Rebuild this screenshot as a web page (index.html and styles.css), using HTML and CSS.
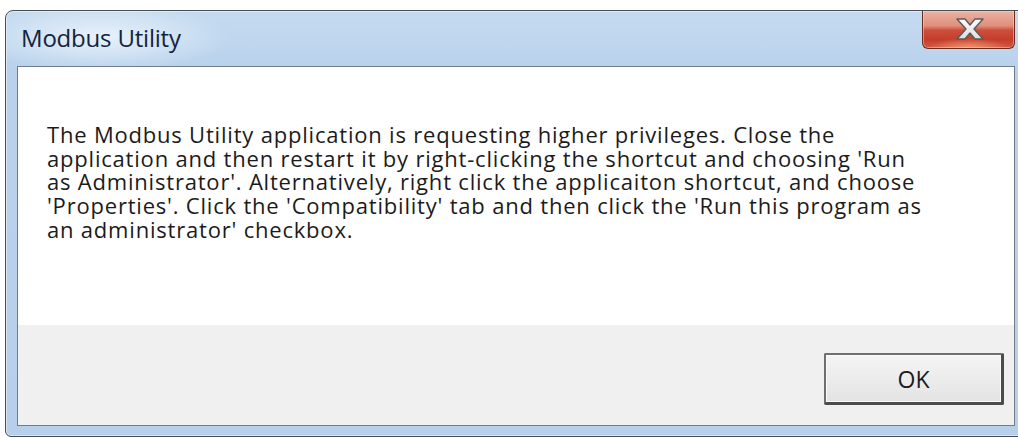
FILE: index.html
```html
<!DOCTYPE html>
<html lang="en">
<head>
<meta charset="utf-8">
<title>Modbus Utility</title>
<link rel="stylesheet" href="styles.css">
</head>
<body>
  <div class="window">
    <div class="titlebar">
      <span class="title">Modbus Utility</span>
      <button class="close" aria-label="Close">
        <svg width="93" height="38" viewBox="0 0 93 38">
          <defs>
            <linearGradient id="xfill" x1="0" y1="0" x2="0" y2="1">
              <stop offset="0" stop-color="#ffffff"/>
              <stop offset="1" stop-color="#dcdcdc"/>
            </linearGradient>
          </defs>
          <!-- the close glyph: an X with flat, horizontal ends -->
          <polygon transform="translate(35 9)"
                   points="0,0 8,0 13,6 18,0 26,0 17,10 26,20 18,20 13,14 8,20 0,20 9,10"
                   fill="url(#xfill)" stroke="#5a5a5a" stroke-width="1.4" stroke-linejoin="round"/>
        </svg>
      </button>
    </div>
    <div class="client">
      <div class="message">
        <p class="line">The Modbus Utility application is requesting higher privileges. Close the</p>
        <p class="line">application and then restart it by right-clicking the shortcut and choosing 'Run</p>
        <p class="line">as Administrator'. Alternatively, right click the applicaiton shortcut, and choose</p>
        <p class="line">'Properties'. Click the 'Compatibility' tab and then click the 'Run this program as</p>
        <p class="line">an administrator' checkbox.</p>
      </div>
      <div class="footer">
        <button class="ok">OK</button>
      </div>
    </div>
  </div>
</body>
</html>
```

FILE: styles.css
```css
html, body {
  margin: 0;
  padding: 0;
  background: #ffffff;
  overflow: hidden;
}

body {
  width: 1018px;
  height: 437px;
}

/* Aero-style dialog frame */
.window {
  box-sizing: border-box;
  margin: 10px 0 0 5px;
  width: 1022px;
  height: 427px;
  border: 1px solid #4a4f57;
  border-radius: 8px 8px 6px 6px;
  background:
    linear-gradient(to bottom, #c4daf0 0, #b9d2ec 60px, #b6cfea 100%);
  box-shadow: inset 0 0 0 1px rgba(255, 255, 255, 0.45);
  display: flex;
  flex-direction: column;
}

.titlebar {
  height: 55px;
  flex: none;
  display: flex;
  justify-content: space-between;
  align-items: flex-start;
  padding-left: 15px;
  background:
    radial-gradient(ellipse 130px 34px at 95px 26px, rgba(235, 243, 251, 0.95), rgba(235, 243, 251, 0) 100%);
  border-radius: 7px 7px 0 0;
}

.title {
  font-family: "Open Sans", "Noto Sans", sans-serif;
  font-size: 24px;
  line-height: 24px;
  margin-top: 15px;
  color: #14233c;
  letter-spacing: -0.2px;
}

.close {
  box-sizing: border-box;
  width: 93px;
  height: 38px;
  margin: 0 11px 0 0;
  padding: 0;
  border: 1px solid #6f2a20;
  border-top: none;
  border-radius: 0 0 6px 6px;
  background:
    radial-gradient(ellipse 40px 10px at 50% 100%, rgba(246, 160, 120, 0.85), rgba(246, 160, 120, 0) 100%),
    linear-gradient(to bottom, #eab3a4 0%, #e08f7b 40%, #cc4f3b 52%, #c53d2b 78%, #d25a42 100%);
  box-shadow: inset 0 0 0 1px rgba(255, 220, 210, 0.45);
  display: block;
}

.close svg {
  display: block;
  margin: -1px 0 0 -1px;
}

/* client area */
.client {
  flex: 1;
  margin: 0 11px 10px 11px;
  border: 1px solid #707c8a;
  display: flex;
  flex-direction: column;
  background: #f0f0f0;
}

.message {
  height: 258px;
  flex: none;
  box-sizing: border-box;
  background: #ffffff;
  padding: 56px 0 0 29px;
  font-family: "Open Sans", "Noto Sans", sans-serif;
  font-size: 22px;
  letter-spacing: 0.8px;
  color: #1b1b1b;
  white-space: nowrap;
}

.line {
  margin: 0;
  line-height: 23.7px;
}

.footer {
  flex: 1;
  display: flex;
  justify-content: flex-end;
  align-items: flex-start;
  padding: 28px 10px 0 0;
}

.ok {
  box-sizing: border-box;
  width: 180px;
  height: 52px;
  border: 2px solid #6e6e6e;
  border-right: 3px solid #4c4c4c;
  border-bottom: 3px solid #4c4c4c;
  border-radius: 2px;
  background: linear-gradient(to bottom, #f4f4f4 0%, #ececec 50%, #e3e3e3 100%);
  box-shadow: inset 0 0 0 1px #fbfbfb;
  font-family: "Open Sans", "Noto Sans", sans-serif;
  font-size: 23px;
  color: #1b1b1b;
  padding: 0;
}
```
